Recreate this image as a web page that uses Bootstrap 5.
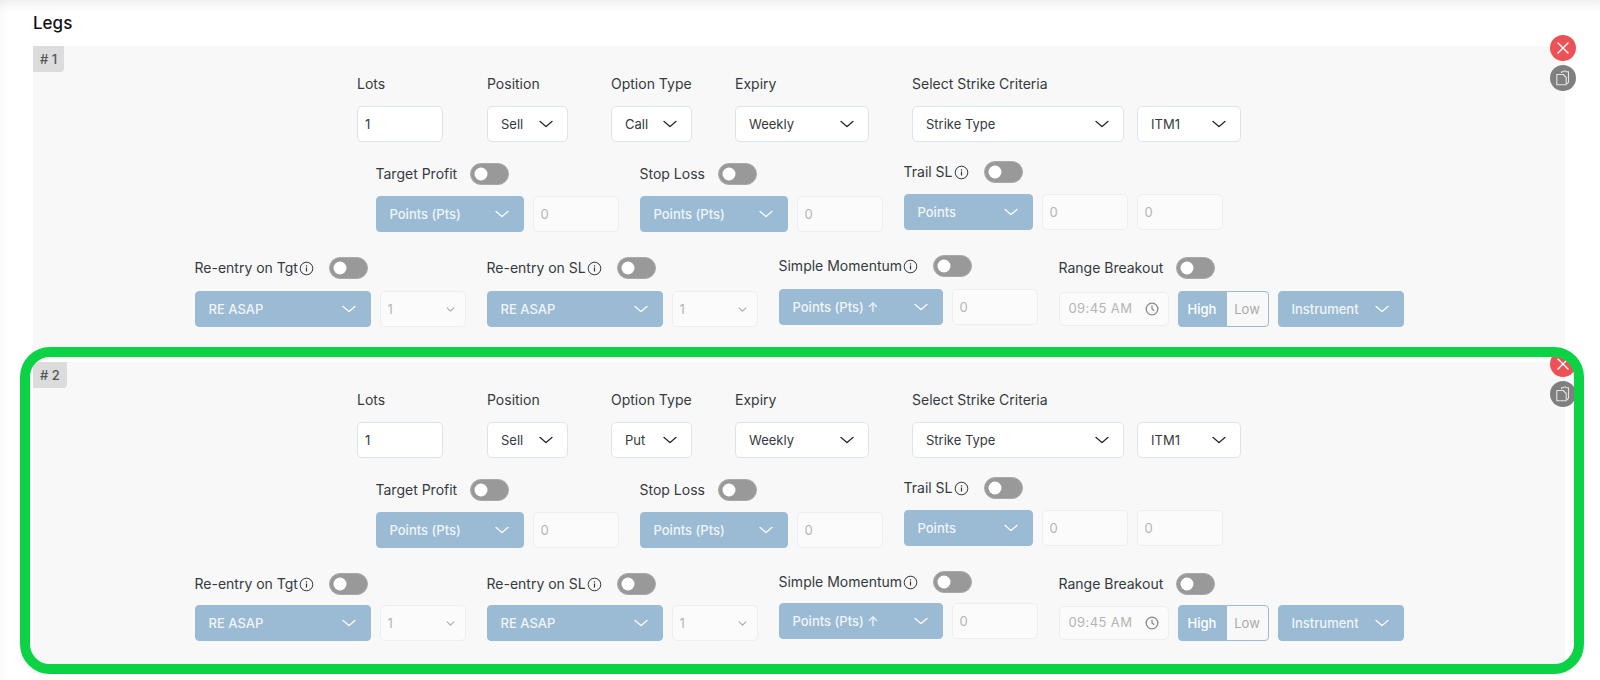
<!DOCTYPE html>
<html lang="en">
<head>
<meta charset="utf-8">
<title>Legs</title>
<link href="https://cdn.jsdelivr.net/npm/bootstrap@5.3.0/dist/css/bootstrap.min.css" rel="stylesheet">
<style>
html,body{height:680px;overflow:hidden;background:#fff;}
body{font-family:Inter,"Liberation Sans",sans-serif;font-size:14px;color:#343a40;}
.sheet{height:680px;padding:0 35px 0 33px;box-shadow:inset 0 14px 12px -10px rgba(0,0,0,.07),inset 12px 0 10px -10px rgba(0,0,0,.04);}
.legs-title{font-size:17px;font-weight:500;line-height:20px;color:#111;padding-top:13px;height:46px;margin:0;}
.leg-panel{position:relative;background:#f8f8f8;height:311px;margin-bottom:5px;}
.leg-num{display:table;padding:0 7px;height:26px;background:#dcdcdc;color:#555;font-size:13px;font-weight:500;line-height:26px;border-radius:0 0 4px 0;}
.fld-label{display:block;font-size:14px;line-height:20px;height:20px;margin:0;color:#343a40;white-space:nowrap;}
.row-a{gap:43px;margin-top:2px;}
.row-b{gap:21px;margin-top:21px;}
.row-c{gap:21px;margin-top:25px;}
.head-a{margin-bottom:12px;}
.head-b{height:22px;margin-bottom:11px;}
.head-c{height:22px;margin-bottom:12px;}
.leg-panel + .leg-panel .head-c{margin-bottom:10px;}
.lift{margin-top:-2px;}
.inner-a{gap:13px;}
.inner-b{gap:9px;}
.info-ic{width:15px;height:15px;margin-left:1px;flex:none;}
.tg-wrap{min-height:0;margin:0 0 0 13px;padding:0;}
.tg-wrap.after-ic{margin-left:15px;}
.form-switch .form-check-input.tg{width:39px;height:22px;margin:0;background-color:#999;border:1px solid #aaa;box-shadow:none;float:none;display:block;
  background-position:left center;
  background-image:url("data:image/svg+xml,%3csvg xmlns='http://www.w3.org/2000/svg' viewBox='-4 -4 8 8'%3e%3ccircle r='2.6' fill='%23fff'/%3e%3c/svg%3e");}
.fld,.fld-sel{height:36px;font-size:13px;line-height:20px;border:1px solid #dbe5ec;border-radius:5px;background-color:#fff;color:#343a40;box-shadow:none;}
.fld{padding:0 6px 0 7px;}
.fld-sel{padding:0 30px 0 13px;background-position:right 13px center;background-size:16px 12px;
  background-image:url("data:image/svg+xml,%3csvg xmlns='http://www.w3.org/2000/svg' viewBox='0 0 16 16' preserveAspectRatio='none'%3e%3cpath fill='none' stroke='%23222' stroke-linecap='round' stroke-linejoin='round' stroke-width='1.4' d='m2 4.5 6 7 6-7'/%3e%3c/svg%3e");}
.fld-blue{border-color:#9abbd3;background-color:#9abbd3;color:#fff;opacity:1;font-weight:500;border-radius:4px;
  background-image:url("data:image/svg+xml,%3csvg xmlns='http://www.w3.org/2000/svg' viewBox='0 0 16 16' preserveAspectRatio='none'%3e%3cpath fill='none' stroke='%23fff' stroke-linecap='round' stroke-linejoin='round' stroke-width='1.4' d='m2 4.5 6 7 6-7'/%3e%3c/svg%3e");}
.fld-blue:disabled{background-color:#9abbd3;color:#f1f5f8;}
.fld-off,.fld-off:disabled{background-color:#fbfbfb;border-color:#eeeeee;color:#b5b5b5;}
.fld-off-sel,.fld-off-sel:disabled{background-color:#fbfbfb;border-color:#eeeeee;color:#b5b5b5;padding-left:7px;background-size:11px 9px;background-position:right 9px center;
  background-image:url("data:image/svg+xml,%3csvg xmlns='http://www.w3.org/2000/svg' viewBox='0 0 16 16'%3e%3cpath fill='none' stroke='%23aaa' stroke-linecap='round' stroke-linejoin='round' stroke-width='2' d='m2 5 6 6 6-6'/%3e%3c/svg%3e");}
.w-lots{width:86px;margin-right:1px;}.w-pos{width:81px;}.w-exp{width:134px;}.w-strike{width:212px;}.w-itm{width:104px;}
.w-sel148{width:148px;}.w-in85{width:86px;}.w-sel130{width:129px;}
.w-re{width:176px;}.w-mom{width:164px;}.w-inst{width:126px;}
.time-box{width:110px;height:34px;margin-top:1px;padding:0 9px;background:#fbfbfb;border:1px solid #eeeeee;border-radius:5px;color:#b5b5b5;font-size:13px;letter-spacing:.4px;white-space:nowrap;}
.time-box svg{width:14px;height:14px;flex:none;}
.hl-group{height:36px;}
.hl-group .btn{font-size:13px;line-height:20px;padding:0;border:1px solid #9abbd3;border-radius:4px;}
.hl-high{width:49px;background:#9abbd3;color:#fff;font-weight:500;}
.hl-low{width:43px;background:#f8f8f8;color:#aaa;}
.side-btn{position:absolute;right:-11px;width:26px;height:26px;border-radius:50%;padding:0;border:0;}
.side-x{top:-11px;background:#ec5156;}
.side-copy{top:19px;background:#7f7f7f;}
.side-x svg{width:16px;height:16px;}
.side-copy svg{width:18px;height:18px;}
.green-ring{position:absolute;left:-13px;right:-19px;top:-15px;bottom:-1px;border:10.5px solid #0cd246;border-radius:30px;pointer-events:none;}
</style>
</head>
<body>
<div class="sheet">
<h6 class="legs-title">Legs</h6>

<div class="leg-panel">
  <div class="leg-num"># 1</div>
  <button class="side-btn side-x d-flex align-items-center justify-content-center" type="button" aria-label="Remove"><svg viewBox="0 0 16 16"><path d="M3 3l10 10M13 3L3 13" stroke="#fff" stroke-width="1.4" stroke-linecap="round"/></svg></button>
  <button class="side-btn side-copy d-flex align-items-center justify-content-center" type="button" aria-label="Copy"><svg viewBox="0 0 18 18" fill="none" stroke="#e4e4e4" stroke-width="1.1" stroke-linejoin="round"><path d="M7.5 4V2.8h1.8L10 2h1.6l.7.8h2.2v10.4l-1.5 1.6"/><path d="M2.8 5.5h6.4l3 3v7.2H2.8z"/></svg></button>

  <div class="d-flex justify-content-center row-a">
    <div class="w-lots"><label class="fld-label head-a">Lots</label><input class="form-control fld" value="1"></div>
    <div class="w-pos"><label class="fld-label head-a">Position</label><select class="form-select fld-sel"><option>Sell</option></select></div>
    <div class="w-pos"><label class="fld-label head-a">Option Type</label><select class="form-select fld-sel"><option>Call</option></select></div>
    <div class="w-exp"><label class="fld-label head-a">Expiry</label><select class="form-select fld-sel"><option>Weekly</option></select></div>
    <div><label class="fld-label head-a">Select Strike Criteria</label>
      <div class="d-flex inner-a"><select class="form-select fld-sel w-strike"><option>Strike Type</option></select><select class="form-select fld-sel w-itm"><option>ITM1</option></select></div></div>
  </div>

  <div class="d-flex justify-content-center align-items-start row-b">
    <div>
      <div class="d-flex align-items-center head-b"><span class="fld-label">Target Profit</span><div class="form-check form-switch tg-wrap"><input class="form-check-input tg" type="checkbox" aria-label="Target Profit"></div></div>
      <div class="d-flex inner-b"><select class="form-select fld-sel fld-blue w-sel148" disabled><option>Points (Pts)</option></select><input class="form-control fld fld-off w-in85" value="0" disabled></div>
    </div>
    <div>
      <div class="d-flex align-items-center head-b"><span class="fld-label">Stop Loss</span><div class="form-check form-switch tg-wrap"><input class="form-check-input tg" type="checkbox" aria-label="Stop Loss"></div></div>
      <div class="d-flex inner-b"><select class="form-select fld-sel fld-blue w-sel148" disabled><option>Points (Pts)</option></select><input class="form-control fld fld-off w-in85" value="0" disabled></div>
    </div>
    <div class="lift">
      <div class="d-flex align-items-center head-b"><span class="fld-label">Trail SL</span><svg class="info-ic" viewBox="0 0 15 15" fill="none" stroke="#333"><circle cx="7.5" cy="7.5" r="6.3"/><path d="M7.5 6.6v4M7.5 4.2v1.2" stroke-width="1.2"/></svg><div class="form-check form-switch tg-wrap after-ic"><input class="form-check-input tg" type="checkbox" aria-label="Trail SL"></div></div>
      <div class="d-flex inner-b"><select class="form-select fld-sel fld-blue w-sel130" disabled><option>Points</option></select><input class="form-control fld fld-off w-in85" value="0" disabled><input class="form-control fld fld-off w-in85" value="0" disabled></div>
    </div>
  </div>

  <div class="d-flex justify-content-center align-items-start row-c">
    <div>
      <div class="d-flex align-items-center head-c"><span class="fld-label">Re-entry on Tgt</span><svg class="info-ic" viewBox="0 0 15 15" fill="none" stroke="#333"><circle cx="7.5" cy="7.5" r="6.3"/><path d="M7.5 6.6v4M7.5 4.2v1.2" stroke-width="1.2"/></svg><div class="form-check form-switch tg-wrap after-ic"><input class="form-check-input tg" type="checkbox" aria-label="Re-entry on Tgt"></div></div>
      <div class="d-flex inner-b"><select class="form-select fld-sel fld-blue w-re" disabled><option>RE ASAP</option></select><select class="form-select fld-sel fld-off-sel w-in85" disabled><option>1</option></select></div>
    </div>
    <div>
      <div class="d-flex align-items-center head-c"><span class="fld-label">Re-entry on SL</span><svg class="info-ic" viewBox="0 0 15 15" fill="none" stroke="#333"><circle cx="7.5" cy="7.5" r="6.3"/><path d="M7.5 6.6v4M7.5 4.2v1.2" stroke-width="1.2"/></svg><div class="form-check form-switch tg-wrap after-ic"><input class="form-check-input tg" type="checkbox" aria-label="Re-entry on SL"></div></div>
      <div class="d-flex inner-b"><select class="form-select fld-sel fld-blue w-re" disabled><option>RE ASAP</option></select><select class="form-select fld-sel fld-off-sel w-in85" disabled><option>1</option></select></div>
    </div>
    <div class="lift">
      <div class="d-flex align-items-center head-c"><span class="fld-label">Simple Momentum</span><svg class="info-ic" viewBox="0 0 15 15" fill="none" stroke="#333"><circle cx="7.5" cy="7.5" r="6.3"/><path d="M7.5 6.6v4M7.5 4.2v1.2" stroke-width="1.2"/></svg><div class="form-check form-switch tg-wrap after-ic"><input class="form-check-input tg" type="checkbox" aria-label="Simple Momentum"></div></div>
      <div class="d-flex inner-b"><select class="form-select fld-sel fld-blue w-mom" disabled><option>Points (Pts) ↑</option></select><input class="form-control fld fld-off w-in85" value="0" disabled></div>
    </div>
    <div>
      <div class="d-flex align-items-center head-c"><span class="fld-label">Range Breakout</span><div class="form-check form-switch tg-wrap"><input class="form-check-input tg" type="checkbox" aria-label="Range Breakout"></div></div>
      <div class="d-flex inner-b">
        <div class="time-box d-flex align-items-center justify-content-between"><span>09:45 AM</span><svg viewBox="0 0 14 14" fill="none" stroke="#888" stroke-width="1.3"><circle cx="7" cy="7" r="5.8"/><path d="M7 3.6V7l2.2 1.6"/></svg></div>
        <div class="btn-group hl-group"><button class="btn hl-high" type="button">High</button><button class="btn hl-low" type="button">Low</button></div>
        <select class="form-select fld-sel fld-blue w-inst" disabled><option>Instrument</option></select>
      </div>
    </div>
  </div>
</div>

<div class="leg-panel">
  <div class="leg-num"># 2</div>
  <button class="side-btn side-x d-flex align-items-center justify-content-center" type="button" aria-label="Remove"><svg viewBox="0 0 16 16"><path d="M3 3l10 10M13 3L3 13" stroke="#fff" stroke-width="1.4" stroke-linecap="round"/></svg></button>
  <button class="side-btn side-copy d-flex align-items-center justify-content-center" type="button" aria-label="Copy"><svg viewBox="0 0 18 18" fill="none" stroke="#e4e4e4" stroke-width="1.1" stroke-linejoin="round"><path d="M7.5 4V2.8h1.8L10 2h1.6l.7.8h2.2v10.4l-1.5 1.6"/><path d="M2.8 5.5h6.4l3 3v7.2H2.8z"/></svg></button>

  <div class="d-flex justify-content-center row-a">
    <div class="w-lots"><label class="fld-label head-a">Lots</label><input class="form-control fld" value="1"></div>
    <div class="w-pos"><label class="fld-label head-a">Position</label><select class="form-select fld-sel"><option>Sell</option></select></div>
    <div class="w-pos"><label class="fld-label head-a">Option Type</label><select class="form-select fld-sel"><option>Put</option></select></div>
    <div class="w-exp"><label class="fld-label head-a">Expiry</label><select class="form-select fld-sel"><option>Weekly</option></select></div>
    <div><label class="fld-label head-a">Select Strike Criteria</label>
      <div class="d-flex inner-a"><select class="form-select fld-sel w-strike"><option>Strike Type</option></select><select class="form-select fld-sel w-itm"><option>ITM1</option></select></div></div>
  </div>

  <div class="d-flex justify-content-center align-items-start row-b">
    <div>
      <div class="d-flex align-items-center head-b"><span class="fld-label">Target Profit</span><div class="form-check form-switch tg-wrap"><input class="form-check-input tg" type="checkbox" aria-label="Target Profit"></div></div>
      <div class="d-flex inner-b"><select class="form-select fld-sel fld-blue w-sel148" disabled><option>Points (Pts)</option></select><input class="form-control fld fld-off w-in85" value="0" disabled></div>
    </div>
    <div>
      <div class="d-flex align-items-center head-b"><span class="fld-label">Stop Loss</span><div class="form-check form-switch tg-wrap"><input class="form-check-input tg" type="checkbox" aria-label="Stop Loss"></div></div>
      <div class="d-flex inner-b"><select class="form-select fld-sel fld-blue w-sel148" disabled><option>Points (Pts)</option></select><input class="form-control fld fld-off w-in85" value="0" disabled></div>
    </div>
    <div class="lift">
      <div class="d-flex align-items-center head-b"><span class="fld-label">Trail SL</span><svg class="info-ic" viewBox="0 0 15 15" fill="none" stroke="#333"><circle cx="7.5" cy="7.5" r="6.3"/><path d="M7.5 6.6v4M7.5 4.2v1.2" stroke-width="1.2"/></svg><div class="form-check form-switch tg-wrap after-ic"><input class="form-check-input tg" type="checkbox" aria-label="Trail SL"></div></div>
      <div class="d-flex inner-b"><select class="form-select fld-sel fld-blue w-sel130" disabled><option>Points</option></select><input class="form-control fld fld-off w-in85" value="0" disabled><input class="form-control fld fld-off w-in85" value="0" disabled></div>
    </div>
  </div>

  <div class="d-flex justify-content-center align-items-start row-c">
    <div>
      <div class="d-flex align-items-center head-c"><span class="fld-label">Re-entry on Tgt</span><svg class="info-ic" viewBox="0 0 15 15" fill="none" stroke="#333"><circle cx="7.5" cy="7.5" r="6.3"/><path d="M7.5 6.6v4M7.5 4.2v1.2" stroke-width="1.2"/></svg><div class="form-check form-switch tg-wrap after-ic"><input class="form-check-input tg" type="checkbox" aria-label="Re-entry on Tgt"></div></div>
      <div class="d-flex inner-b"><select class="form-select fld-sel fld-blue w-re" disabled><option>RE ASAP</option></select><select class="form-select fld-sel fld-off-sel w-in85" disabled><option>1</option></select></div>
    </div>
    <div>
      <div class="d-flex align-items-center head-c"><span class="fld-label">Re-entry on SL</span><svg class="info-ic" viewBox="0 0 15 15" fill="none" stroke="#333"><circle cx="7.5" cy="7.5" r="6.3"/><path d="M7.5 6.6v4M7.5 4.2v1.2" stroke-width="1.2"/></svg><div class="form-check form-switch tg-wrap after-ic"><input class="form-check-input tg" type="checkbox" aria-label="Re-entry on SL"></div></div>
      <div class="d-flex inner-b"><select class="form-select fld-sel fld-blue w-re" disabled><option>RE ASAP</option></select><select class="form-select fld-sel fld-off-sel w-in85" disabled><option>1</option></select></div>
    </div>
    <div class="lift">
      <div class="d-flex align-items-center head-c"><span class="fld-label">Simple Momentum</span><svg class="info-ic" viewBox="0 0 15 15" fill="none" stroke="#333"><circle cx="7.5" cy="7.5" r="6.3"/><path d="M7.5 6.6v4M7.5 4.2v1.2" stroke-width="1.2"/></svg><div class="form-check form-switch tg-wrap after-ic"><input class="form-check-input tg" type="checkbox" aria-label="Simple Momentum"></div></div>
      <div class="d-flex inner-b"><select class="form-select fld-sel fld-blue w-mom" disabled><option>Points (Pts) ↑</option></select><input class="form-control fld fld-off w-in85" value="0" disabled></div>
    </div>
    <div>
      <div class="d-flex align-items-center head-c"><span class="fld-label">Range Breakout</span><div class="form-check form-switch tg-wrap"><input class="form-check-input tg" type="checkbox" aria-label="Range Breakout"></div></div>
      <div class="d-flex inner-b">
        <div class="time-box d-flex align-items-center justify-content-between"><span>09:45 AM</span><svg viewBox="0 0 14 14" fill="none" stroke="#888" stroke-width="1.3"><circle cx="7" cy="7" r="5.8"/><path d="M7 3.6V7l2.2 1.6"/></svg></div>
        <div class="btn-group hl-group"><button class="btn hl-high" type="button">High</button><button class="btn hl-low" type="button">Low</button></div>
        <select class="form-select fld-sel fld-blue w-inst" disabled><option>Instrument</option></select>
      </div>
    </div>
  </div>
  <div class="green-ring"></div>
</div>
</div>
<script src="https://cdn.jsdelivr.net/npm/bootstrap@5.3.0/dist/js/bootstrap.bundle.min.js"></script>
</body>
</html>
